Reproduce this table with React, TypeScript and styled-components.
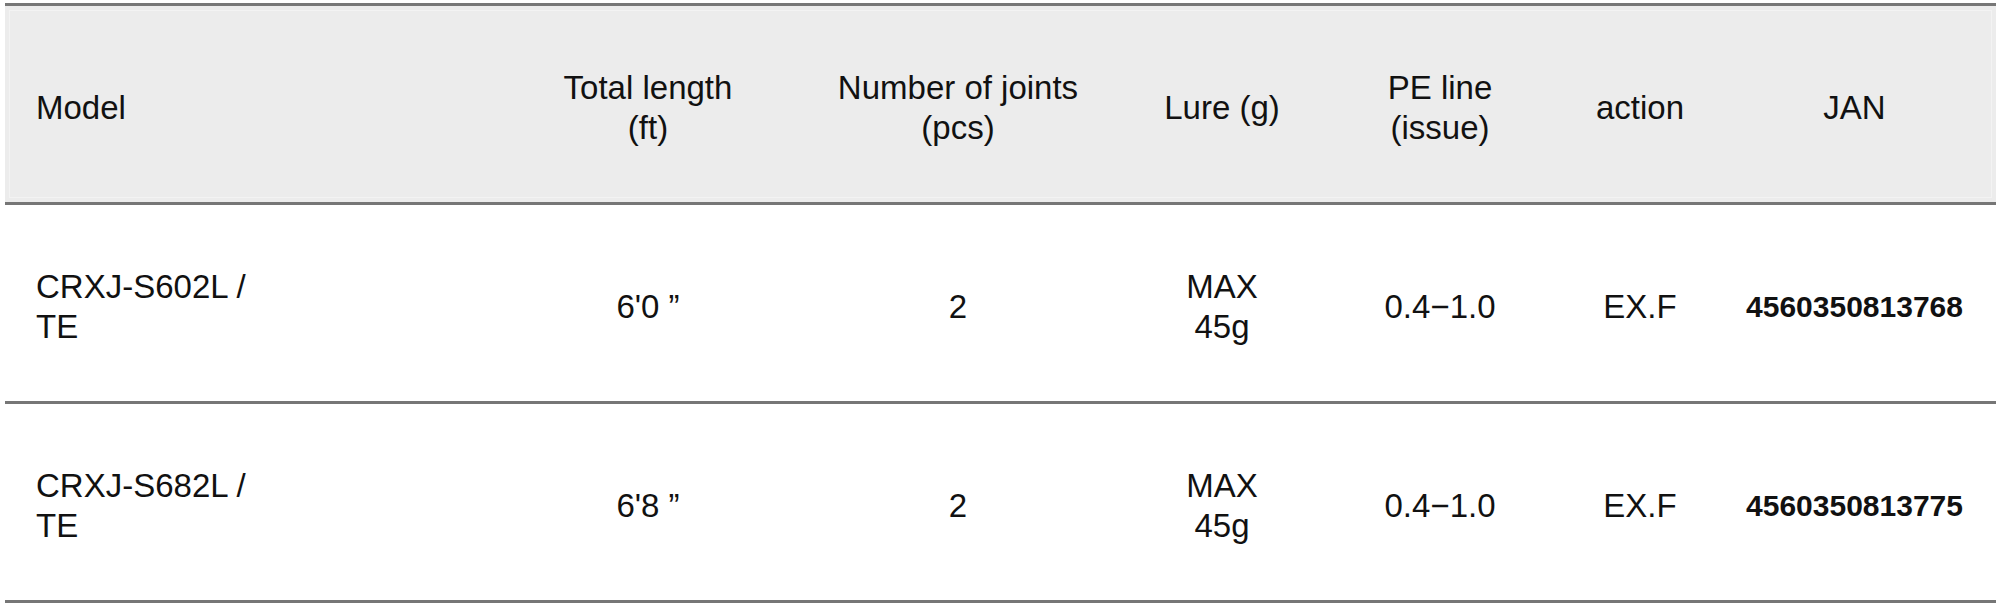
import React from "react";
import styled, { createGlobalStyle } from "styled-components";

const GlobalStyle = createGlobalStyle`
  html, body {
    margin: 0;
    padding: 0;
    background: #ffffff;
  }
  body {
    font-family: "Liberation Sans", Arial, sans-serif;
    color: #111111;
  }
`;

const COLUMNS = "488px 310px 310px 218px 218px 182px 1fr";

const Page = styled.div`
  width: 2000px;
  padding: 3px 4px 0 5px;
  box-sizing: border-box;
`;

const Table = styled.div`
  border-top: 3px solid #777777;
`;

const Row = styled.div<{ $head?: boolean }>`
  display: grid;
  grid-template-columns: ${COLUMNS};
  height: 196px;
  border-bottom: 3px solid #767676;
  background: ${(p) => (p.$head ? "#ececec" : "#ffffff")};
  box-shadow: ${(p) => (p.$head ? "inset 0 0 0 4px #ececec, inset 0 0 0 5px #f3f3f3" : "none")};
`;

const Cell = styled.div<{ $left?: boolean }>`
  display: flex;
  align-items: center;
  justify-content: ${(p) => (p.$left ? "flex-start" : "center")};
  text-align: ${(p) => (p.$left ? "left" : "center")};
  padding: 7px 0 0 ${(p) => (p.$left ? "31px" : "0")};
  font-size: 33px;
  line-height: 40px;
  color: #111111;
`;

const JanCell = styled(Cell)`
  padding-right: 18px;
`;

const ModelName = styled.span`
  max-width: 240px;
`;

const Jan = styled.span`
  font-size: 30px;
  font-weight: 700;
  letter-spacing: 0;
`;

type Spec = {
  model: string;
  length: string;
  joints: string;
  lure: string;
  pe: string;
  action: string;
  jan: string;
};

const rows: Spec[] = [
  {
    model: "CRXJ-S602L / TE",
    length: "6'0 ”",
    joints: "2",
    lure: "MAX 45g",
    pe: "0.4−1.0",
    action: "EX.F",
    jan: "4560350813768",
  },
  {
    model: "CRXJ-S682L / TE",
    length: "6'8 ”",
    joints: "2",
    lure: "MAX 45g",
    pe: "0.4−1.0",
    action: "EX.F",
    jan: "4560350813775",
  },
];

const Lines = ({ a, b }: { a: string; b: string }) => (
  <span>
    {a}
    <br />
    {b}
  </span>
);

export default function App() {
  return (
    <>
      <GlobalStyle />
      <Page>
        <Table>
          <Row $head>
            <Cell $left>Model</Cell>
            <Cell>
              <Lines a="Total length" b="(ft)" />
            </Cell>
            <Cell>
              <Lines a="Number of joints" b="(pcs)" />
            </Cell>
            <Cell>Lure (g)</Cell>
            <Cell>
              <Lines a="PE line" b="(issue)" />
            </Cell>
            <Cell>action</Cell>
            <JanCell>JAN</JanCell>
          </Row>
          {rows.map((r) => (
            <Row key={r.jan}>
              <Cell $left>
                <ModelName>{r.model}</ModelName>
              </Cell>
              <Cell>{r.length}</Cell>
              <Cell>{r.joints}</Cell>
              <Cell>
                <Lines a="MAX" b="45g" />
              </Cell>
              <Cell>{r.pe}</Cell>
              <Cell>{r.action}</Cell>
              <JanCell>
                <Jan>{r.jan}</Jan>
              </JanCell>
            </Row>
          ))}
        </Table>
      </Page>
    </>
  );
}
